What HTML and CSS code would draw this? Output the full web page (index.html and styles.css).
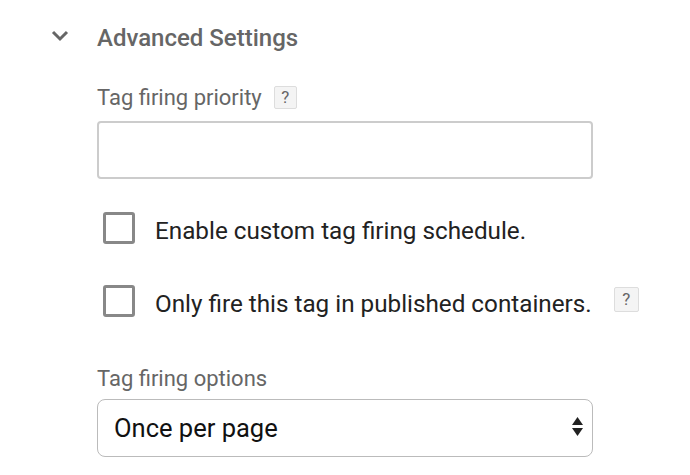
FILE: index.html
```html
<!DOCTYPE html>
<html>
<head>
<meta charset="utf-8">
<link rel="stylesheet" href="styles.css">
</head>
<body>
<div class="panel">
  <div class="header">
    <svg class="chevron" width="18" height="12" viewBox="0 0 18 12"><path d="M2 2 L9 9 L16 2" fill="none" stroke="#666" stroke-width="3"/></svg>
    <span class="title">Advanced Settings</span>
  </div>
  <div class="body">
    <div class="label">Tag firing priority <span class="help">?</span></div>
    <div class="input"></div>
    <div class="check first"><span class="box"></span><span class="ctext">Enable custom tag firing schedule.</span></div>
    <div class="check second"><span class="box"></span><span class="ctext">Only fire this tag in published containers.</span><span class="help help2">?</span></div>
    <div class="label opts">Tag firing options</div>
    <div class="select"><span class="sval">Once per page</span>
      <svg class="arrows" width="11" height="20" viewBox="0 0 11 20"><path d="M5.5 0 L11 8 L0 8 Z M0 11 L11 11 L5.5 19 Z" fill="#222"/></svg>
    </div>
  </div>
</div>
</body>
</html>
```
FILE: styles.css
```css
html, body { margin: 0; padding: 0; background: #fff; }
body { font-family: Roboto, "Noto Sans", sans-serif; width: 690px; height: 475px; overflow: hidden; }
.panel { padding: 24px 0 0 0; }
.header { display: flex; align-items: center; height: 28px; }
.chevron { margin-left: 51px; margin-right: 28px; margin-top: -4px; }
.title { font-size: 24px; color: #666; font-weight: 500; }
.body { padding-left: 97px; }
.label { font-size: 22px; color: #666; display: flex; align-items: center; margin-top: 33px; height: 24px; }
.help { display: inline-flex; align-items: center; justify-content: center; width: 23px; height: 23px; box-sizing: border-box; border: 1px solid #ddd; background: #f4f4f4; border-radius: 2px; font-size: 17px; color: #666; margin-left: 12px; }
.input { width: 496px; height: 58px; box-sizing: border-box; border: 2px solid #ccc; border-radius: 4px; margin-top: 12px; }
.check { display: flex; align-items: center; height: 32px; }
.check.first { margin-top: 33px; }
.check.second { margin-top: 41px; }
.box { width: 32px; height: 32px; box-sizing: border-box; border: 3px solid #888; border-radius: 3px; margin-left: 6px; margin-right: 20px; }
.ctext { font-size: 24.25px; color: #222; margin-top: 5px; }
.help2 { margin-left: 22px; margin-top: -4px; width: 25px; height: 25px; }
.label.opts { margin-top: 49px; }
.select { position: relative; width: 496px; height: 58px; box-sizing: border-box; border: 1px solid #bbb; border-radius: 8px; margin-top: 9px; display: flex; align-items: center; padding-left: 16px; }
.sval { font-size: 25.5px; color: #111; }
.arrows { position: absolute; left: 474px; top: 17px; }
```
